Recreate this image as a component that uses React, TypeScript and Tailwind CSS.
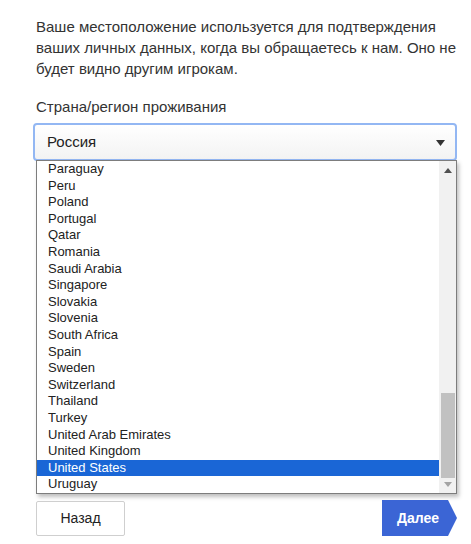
import React from 'react';

const countries = [
  'Paraguay',
  'Peru',
  'Poland',
  'Portugal',
  'Qatar',
  'Romania',
  'Saudi Arabia',
  'Singapore',
  'Slovakia',
  'Slovenia',
  'South Africa',
  'Spain',
  'Sweden',
  'Switzerland',
  'Thailand',
  'Turkey',
  'United Arab Emirates',
  'United Kingdom',
  'United States',
  'Uruguay',
];

export default function App() {
  return (
    <div className="w-[471px] h-[544px] bg-white overflow-hidden font-['Liberation_Sans',Arial,sans-serif] text-[#333]">
      <div className="pl-[36px] pr-[14px] pt-[16px]">
        {/* Intro */}
        <p className="text-[15px] leading-[21px] w-[421px]">
          Ваше местоположение используется для подтверждения ваших личных данных, когда вы обращаетесь к нам. Оно не будет видно другим игрокам.
        </p>

        <div className="mt-[18px] text-[15px] leading-[20px]">Страна/регион проживания</div>

        {/* Select */}
        <div className="mt-[6px] -ml-[3px] w-[424px] h-[38px] rounded-[4px] border-2 border-[#93b7f3] bg-gradient-to-b from-white to-[#f3f3f3] flex items-center justify-between pl-[12px] pr-[10px]">
          <span className="text-[15px] text-[#222]">Россия</span>
          <svg width="9" height="6" viewBox="0 0 9 6" className="mt-[2px]">
            <path d="M0 0h9L4.5 6z" fill="#333" />
          </svg>
        </div>

        {/* Open dropdown list */}
        <div className="-mt-[1px] w-[421px] h-[334px] border border-[#7d7d7d] bg-white shadow-[2px_3px_4px_rgba(0,0,0,0.25)] flex overflow-hidden">
          <ul className="flex-1 text-[13px] text-[#222]">
            {countries.map((c) => (
              <li
                key={c}
                className={
                  c === 'United States'
                    ? 'h-[16.6px] leading-[16.6px] pl-[11px] bg-[#1a66d6] text-white'
                    : 'h-[16.6px] leading-[16.6px] pl-[11px]'
                }
              >
                {c}
              </li>
            ))}
          </ul>
          {/* Scrollbar */}
          <div className="w-[17px] bg-[#f1f1f1] flex flex-col items-center">
            <svg width="8" height="5" viewBox="0 0 8 5" className="mt-[7px]">
              <path d="M0 5h8L4 0z" fill="#505050" />
            </svg>
            <div className="mt-[220px] w-[14px] h-[85px] bg-[#c1c1c1]" />
            <svg width="8" height="5" viewBox="0 0 8 5" className="mt-[4px]">
              <path d="M0 0h8L4 5z" fill="#a3a3a3" />
            </svg>
          </div>
        </div>

        {/* Buttons */}
        <div className="mt-[6px] flex items-center justify-between w-[421px]">
          <button className="w-[89px] h-[35px] border border-[#cfcfcf] rounded-[2px] bg-white text-[14px] text-[#222]">
            Назад
          </button>
          <div className="flex items-center">
            <div className="w-[66px] h-[36px] bg-[#3b65d5] text-white font-bold text-[14px] flex items-center justify-center pl-[6px]">
              Далее
            </div>
            <svg width="10" height="36" viewBox="0 0 10 36" className="-ml-px">
              <path d="M0 0h1L10 18 1 36H0z" fill="#3b65d5" />
            </svg>
          </div>
        </div>
      </div>
    </div>
  );
}
